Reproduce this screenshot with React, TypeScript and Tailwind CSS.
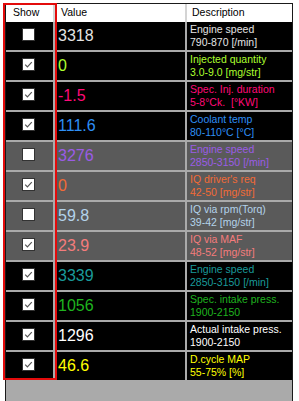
import React from 'react';

type Row = {
  checked: boolean;
  value: string;
  line1: string;
  line2: string;
  color: string;
  dark: boolean;
};

const rows: Row[] = [
  { checked: false, value: '3318', line1: 'Engine speed', line2: '790-870 [/min]', color: 'text-[#e4e4e4]', dark: true },
  { checked: true, value: '0', line1: 'Injected quantity', line2: '3.0-9.0 [mg/str]', color: 'text-[#adff2f]', dark: true },
  { checked: true, value: '-1.5', line1: 'Spec. Inj. duration', line2: '5-8°Ck.  [°KW]', color: 'text-[#ff0a78]', dark: true },
  { checked: true, value: '111.6', line1: 'Coolant temp', line2: '80-110°C [°C]', color: 'text-[#2e8ff5]', dark: true },
  { checked: false, value: '3276', line1: 'Engine speed', line2: '2850-3150 [/min]', color: 'text-[#9a5ce6]', dark: false },
  { checked: true, value: '0', line1: "IQ driver's req", line2: '42-50 [mg/str]', color: 'text-[#f26a36]', dark: false },
  { checked: false, value: '59.8', line1: 'IQ via rpm(Torq)', line2: '39-42 [mg/str]', color: 'text-[#b3d3ea]', dark: false },
  { checked: true, value: '23.9', line1: 'IQ via MAF', line2: '48-52 [mg/str]', color: 'text-[#f47c7c]', dark: false },
  { checked: true, value: '3339', line1: 'Engine speed', line2: '2850-3150 [/min]', color: 'text-[#1a9a9a]', dark: true },
  { checked: true, value: '1056', line1: 'Spec. intake press.', line2: '1900-2150', color: 'text-[#1fb31f]', dark: true },
  { checked: true, value: '1296', line1: 'Actual intake press.', line2: '1900-2150', color: 'text-white', dark: true },
  { checked: true, value: '46.6', line1: 'D.cycle MAP', line2: '55-75% [%]', color: 'text-[#ffff00]', dark: true },
];

function Check({ checked }: { checked: boolean }) {
  return (
    <div className="w-[13px] h-[13px] bg-white border border-[#333]">
      {checked && (
        <svg width="11" height="11" viewBox="0 0 11 11">
          <path d="M2.2 5.6 L4.4 7.8 L8.8 3.2" fill="none" stroke="#555" strokeWidth="1.2" />
        </svg>
      )}
    </div>
  );
}

export default function App() {
  return (
    <div
      className="relative w-[299px] h-[401px] overflow-hidden bg-white"
      style={{ fontFamily: '"Liberation Sans", Arial, sans-serif' }}
    >
      <div className="ml-[5px] mt-[3px] w-[288px] h-[398px] border-x border-t border-[#1a1a1a] bg-[#aaaaaa]">
        <div className="flex h-[18px] bg-white text-[10.5px] text-black">
          <div className="w-[49px] border-r-2 border-[#d4d4d4] pl-[7px] flex items-center">Show</div>
          <div className="w-[132px] border-r-2 border-[#d4d4d4] pl-[6px] flex items-center">Value</div>
          <div className="flex-1 pl-[5px] flex items-center">Description</div>
        </div>
        {rows.map((r, i) => (
          <div
            key={i}
            className={`flex h-[30px] border-b-2 border-[#aaaaaa] ${r.dark ? 'bg-black' : 'bg-[#5a5a5a]'}`}
          >
            <div className="w-[49px] border-r-2 border-[#aaaaaa] flex justify-center pt-[6px] pr-[2px]">
              <Check checked={r.checked} />
            </div>
            <div className={`w-[132px] border-r-2 border-[#aaaaaa] pl-[3px] flex items-center text-[16px] ${r.color}`}>
              {r.value}
            </div>
            <div className={`flex-1 pl-[3px] flex flex-col justify-center text-[10.5px] leading-[13px] whitespace-pre ${r.color}`}>
              <span>{r.line1}</span>
              <span>{r.line2}</span>
            </div>
          </div>
        ))}
      </div>
      <div className="absolute left-[3px] top-[3px] w-[54px] h-[377px] border-2 border-[#e30b0b]" />
    </div>
  );
}
